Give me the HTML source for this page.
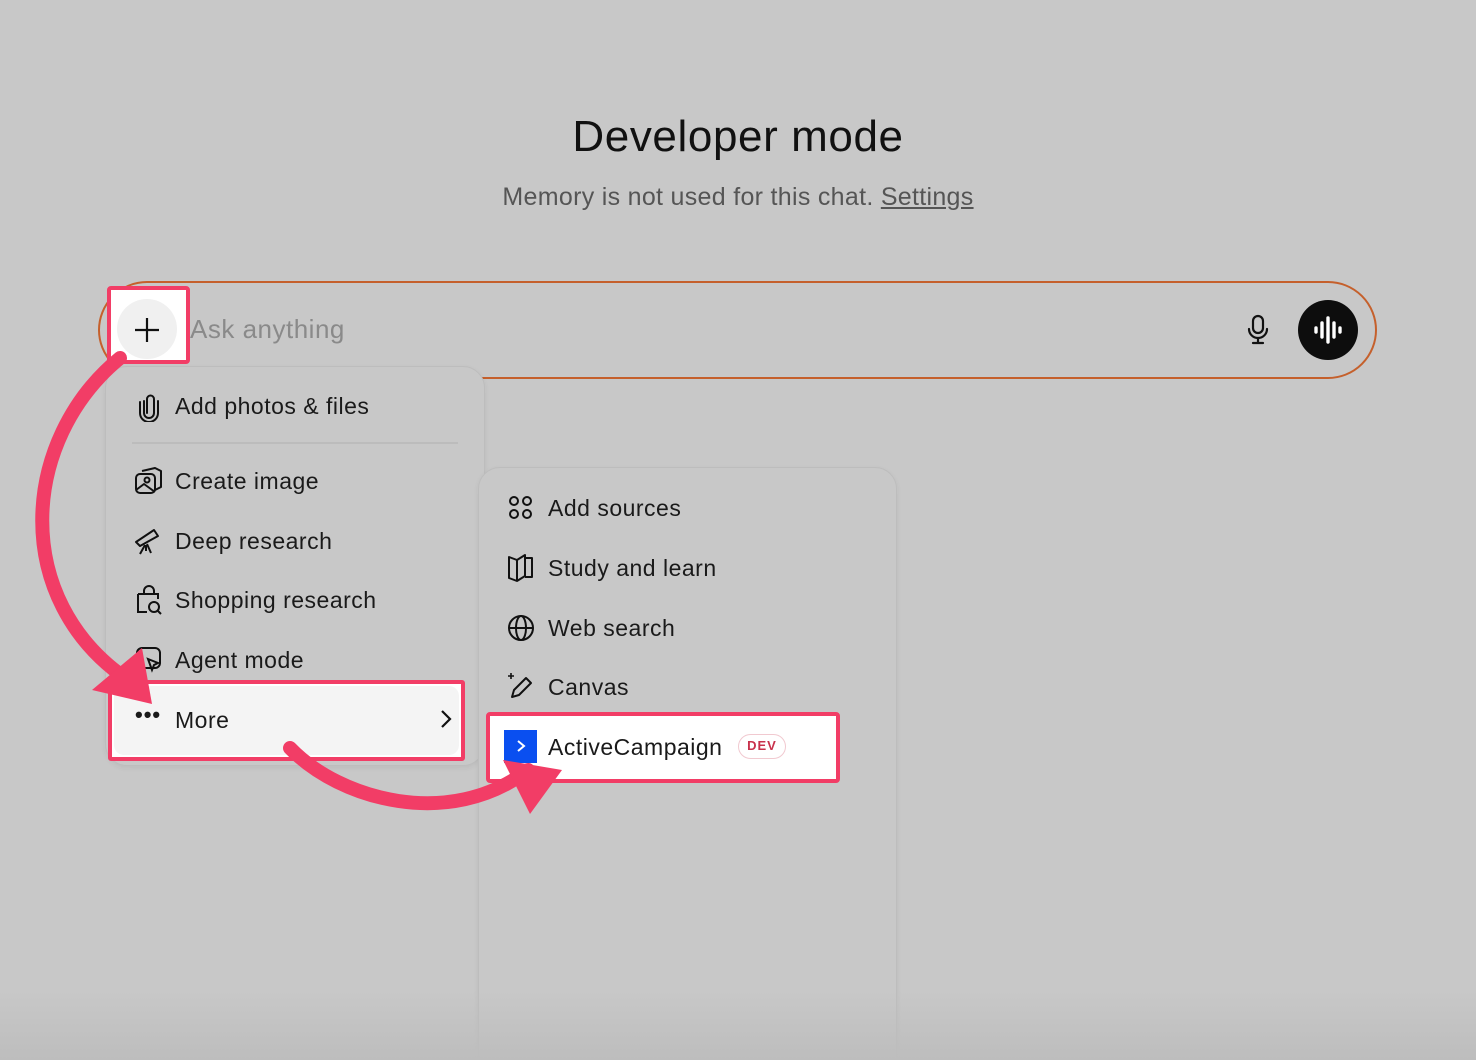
<!DOCTYPE html>
<html><head><meta charset="utf-8"><style>
*{margin:0;padding:0;box-sizing:border-box}
html,body{width:1476px;height:1060px;overflow:hidden}
body{background:#c8c8c8;font-family:"Liberation Sans",sans-serif;color:#1a1a1a;position:relative}
.abs{position:absolute}
h1{position:absolute;top:112px;left:0;width:1476px;text-align:center;font-weight:400;font-size:44px;color:#111;letter-spacing:0.6px}
.sub{position:absolute;top:183px;left:0;width:1476px;text-align:center;font-size:25px;color:#555;letter-spacing:0.3px}
.sub u{color:#555}
.inp{left:98px;top:281px;width:1279px;height:98px;border:2.5px solid #c5602c;border-radius:49px}
.menu{border:1.5px solid #bdbdbd;border-radius:22px;background:#c8c8c8;box-shadow:0 2px 6px rgba(0,0,0,.06)}
.it{position:absolute;font-size:23px;color:#1a1a1a;white-space:nowrap;letter-spacing:0.5px}
.ic{position:absolute}
.pink{border:4px solid #f23d66;border-radius:4px;background:#fff}
</style></head><body>
<h1>Developer mode</h1>
<div class="sub">Memory is not used for this chat. <u>Settings</u></div>
<div class="abs inp"></div>
<div class="it" style="left:190px;top:314px;font-size:26px;color:#8a8a8a">Ask anything</div>
<svg class="ic" style="left:1245px;top:314px" width="26" height="32" viewBox="0 0 26 32" fill="none" stroke="#111" stroke-width="2.2" stroke-linecap="round"><rect x="8" y="2" width="10" height="17" rx="5"/><path d="M4 15a9 9 0 0 0 18 0M13 24v5M8 29h10"/></svg>
<div class="abs" style="left:1298px;top:300px;width:60px;height:60px;border-radius:50%;background:#0d0d0d"></div>
<svg class="ic" style="left:1298px;top:300px" width="60" height="60" stroke="#fff" stroke-width="3.4" stroke-linecap="round"><path d="M18 28v4M24 23v14M30 18v24M36 23v14M42 28v4"/></svg>
<div class="abs pink" style="left:107px;top:286px;width:83px;height:78px"></div>
<div class="abs" style="left:117px;top:299px;width:60px;height:60px;border-radius:50%;background:#f0f0f0"></div>
<svg class="ic" style="left:133px;top:316px" width="28" height="28" stroke="#111" stroke-width="2.2"><path d="M14 2v24M2 14h24"/></svg>

<div class="abs menu" style="left:105px;top:366px;width:380px;height:400px"></div>
<div class="abs" style="left:132px;top:442px;width:326px;height:2px;background:#bcbcbc"></div>
<svg class="ic" style="left:136px;top:392px" width="26" height="30" fill="none" stroke="#111" stroke-width="2" stroke-linecap="round"><path d="M8 9v12a5 5 0 0 0 10 0V7a3.5 3.5 0 0 0-7 0v14"/><path d="M4 10v11a9 9 0 0 0 18 0V9"/></svg>
<div class="it" style="left:175px;top:393px">Add photos &amp; files</div>
<svg class="ic" style="left:133px;top:466px" width="30" height="30" fill="none" stroke="#111" stroke-width="2" stroke-linejoin="round"><rect x="3" y="8" width="19" height="19" rx="4"/><path d="M9 5l13-3 6 3v16l-6 3"/><circle cx="14" cy="14" r="2.5"/><path d="M3 24l8-6 11 8"/></svg>
<div class="it" style="left:175px;top:468px">Create image</div>
<svg class="ic" style="left:133px;top:526px" width="30" height="30" fill="none" stroke="#111" stroke-width="2" stroke-linejoin="round"><path d="M3 16l18-12 4 6-18 10z"/><path d="M12 19l-5 9M14 18l4 9M13 19v6"/></svg>
<div class="it" style="left:175px;top:528px">Deep research</div>
<svg class="ic" style="left:134px;top:585px" width="30" height="32" fill="none" stroke="#111" stroke-width="2"><path d="M10 9V6a5 5 0 0 1 10 0v3M4 9h20v5M4 9v18h9"/><circle cx="20" cy="22" r="5"/><path d="M24 26l3 3"/></svg>
<div class="it" style="left:175px;top:587px">Shopping research</div>
<svg class="ic" style="left:134px;top:645px" width="30" height="30" fill="none" stroke="#111" stroke-width="2"><rect x="3" y="3" width="23" height="20" rx="5"/><path d="M14 14l10 4-4 2-2 5z" fill="#c8c8c8"/></svg>
<div class="it" style="left:175px;top:647px">Agent mode</div>
<div class="abs pink" style="left:108px;top:680px;width:357px;height:81px;border-radius:3px"></div>
<div class="abs" style="left:114px;top:686px;width:345px;height:69px;background:#f4f4f4;border-radius:10px"></div>
<div class="it" style="left:135px;top:702px;font-size:22px;letter-spacing:1px;font-weight:bold">•••</div>
<div class="it" style="left:175px;top:707px">More</div>
<svg class="ic" style="left:438px;top:708px" width="16" height="22" fill="none" stroke="#111" stroke-width="2.2"><path d="M4 3l8 8-8 8"/></svg>

<div class="abs menu" style="left:478px;top:467px;width:419px;height:610px"></div>
<svg class="ic" style="left:507px;top:494px" width="28" height="28" fill="none" stroke="#111" stroke-width="2"><circle cx="7" cy="7" r="4"/><circle cx="20" cy="7" r="4"/><circle cx="7" cy="20" r="4"/><circle cx="20" cy="20" r="4"/></svg>
<div class="it" style="left:548px;top:495px">Add sources</div>
<svg class="ic" style="left:506px;top:552px" width="30" height="32" fill="none" stroke="#111" stroke-width="2" stroke-linejoin="round"><path d="M3 5l8 3v21l-8-3zM11 8l8-5v21l-8 5M19 6h7v19h-7"/></svg>
<div class="it" style="left:548px;top:555px">Study and learn</div>
<svg class="ic" style="left:506px;top:613px" width="30" height="30" fill="none" stroke="#111" stroke-width="2"><circle cx="15" cy="15" r="12"/><ellipse cx="15" cy="15" rx="5" ry="12"/><path d="M3 15h24"/></svg>
<div class="it" style="left:548px;top:615px">Web search</div>
<svg class="ic" style="left:506px;top:671px" width="30" height="30" fill="none" stroke="#111" stroke-width="2" stroke-linejoin="round"><path d="M6 26l2-7 12-12 5 5-12 12z"/><path d="M5 2v6M2 5h6" stroke-width="1.6"/></svg>
<div class="it" style="left:548px;top:674px">Canvas</div>
<div class="abs pink" style="left:486px;top:712px;width:354px;height:71px"></div>
<div class="abs" style="left:504px;top:730px;width:33px;height:33px;background:#0a4ff0"></div>
<svg class="ic" style="left:504px;top:730px" width="33" height="33" fill="none" stroke="#fff" stroke-width="2"><path d="M14 11l6 5-6 5"/></svg>
<div class="it" style="left:548px;top:734px">ActiveCampaign</div>
<div class="abs" style="left:738px;top:734px;width:48px;height:25px;border:1.5px solid #f1c9d0;border-radius:13px;font-size:13px;font-weight:bold;color:#c8324c;text-align:center;line-height:22px;letter-spacing:1px">DEV</div>

<div class="abs" style="left:0;top:990px;width:1476px;height:70px;background:linear-gradient(#c8c8c800,#bdbdbd)"></div>

<svg class="abs" style="left:0;top:0" width="1476" height="1060" fill="none">
<path d="M120 358 C20 440 10 600 128 680" stroke="#f23d66" stroke-width="14" stroke-linecap="round"/>
<path d="M92 690 L152 704 L142 648 Z" fill="#f23d66"/>
<path d="M290 748 C340 800 450 830 528 770" stroke="#f23d66" stroke-width="14" stroke-linecap="round"/>
<path d="M503 760 L562 770 L530 814 Z" fill="#f23d66"/>
</svg>
</body></html>
